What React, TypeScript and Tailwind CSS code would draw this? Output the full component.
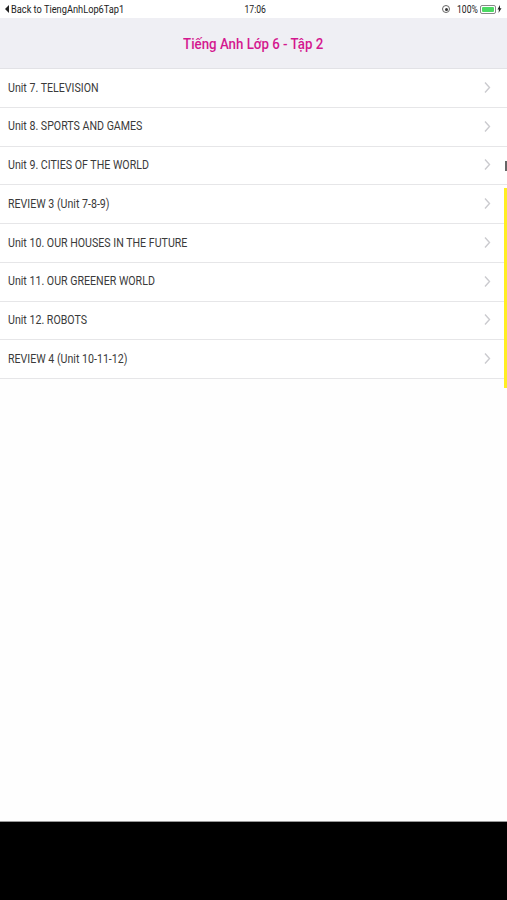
const rows = [
  "Unit 7. TELEVISION",
  "Unit 8. SPORTS AND GAMES",
  "Unit 9. CITIES OF THE WORLD",
  "REVIEW 3 (Unit 7-8-9)",
  "Unit 10. OUR HOUSES IN THE FUTURE",
  "Unit 11. OUR GREENER WORLD",
  "Unit 12. ROBOTS",
  "REVIEW 4 (Unit 10-11-12)",
];

function Chevron() {
  return (
    <svg width="7" height="12" viewBox="0 0 7 12" fill="none" className="shrink-0 -translate-y-[0.5px]">
      <path d="M1 1l4.5 5-4.5 5" stroke="#cbcbcf" strokeWidth="1.4" />
    </svg>
  );
}

export default function App() {
  return (
    <div className="relative flex h-[900px] w-[507px] flex-col overflow-hidden bg-black font-['Roboto',sans-serif]">
      <div className="relative flex h-[18px] shrink-0 items-center justify-between bg-white pl-[5px] pr-[5px] text-[10px] text-[#222]">
        <div className="flex w-[190px] items-center gap-[2px]">
          <span className="h-0 w-0 border-y-[4px] border-r-[4px] border-y-transparent border-r-[#222]" />
          <span className="origin-left scale-x-[0.925] whitespace-nowrap">Back to TiengAnhLop6Tap1</span>
        </div>
        <span className="scale-x-[0.86] pl-[3px]">17:06</span>
        <div className="flex w-[190px] items-center justify-end">
          <span className="mr-[7px] flex h-[8px] w-[8px] items-center justify-center rounded-full border border-[#666]">
            <span className="h-[3px] w-[3px] rounded-full bg-[#333]" />
          </span>
          <span className="mr-[2px] inline-block w-[21px] origin-left scale-x-[0.86] whitespace-nowrap">100%</span>
          <span className="flex h-[9px] w-[16px] rounded-[2px] border border-[#888] p-[1px]">
            <span className="h-full w-full rounded-[1px] bg-[#4cd964]" />
          </span>
          <svg width="5" height="8" viewBox="0 0 5 8" className="ml-[1px]">
            <path d="M3 0L0.5 4.5H2L1.5 8L4.5 3.2H3Z" fill="#222" />
          </svg>
        </div>
      </div>
      <div className="flex h-[51px] shrink-0 items-center justify-center border-b border-[#e2e2e6] bg-[#efeff4] pt-[2px] text-[15px] font-medium text-[#d4178f]">
        <span className="scale-x-[0.885] whitespace-nowrap">Tiếng Anh Lớp 6 - Tập 2</span>
      </div>
      <div className="flex h-[753px] shrink-0 flex-col border-b border-[#999] bg-[#fefefe]">
        {rows.map((r) => (
          <div
            key={r}
            className="flex h-[38.75px] shrink-0 items-center justify-between border-b border-[#e6e6e8] bg-white pl-[7.5px] pr-[16px] text-[12.5px] text-[#3a3a3a]"
          >
            <span className="origin-left scale-x-[0.85] whitespace-nowrap">{r}</span>
            <Chevron />
          </div>
        ))}
      </div>
      <div className="absolute right-0 top-[188px] h-[200px] w-[3px] bg-[#ffee22]" />
      <div className="absolute right-0 top-[161px] h-[10px] w-[2px] bg-[#666]" />
    </div>
  );
}
